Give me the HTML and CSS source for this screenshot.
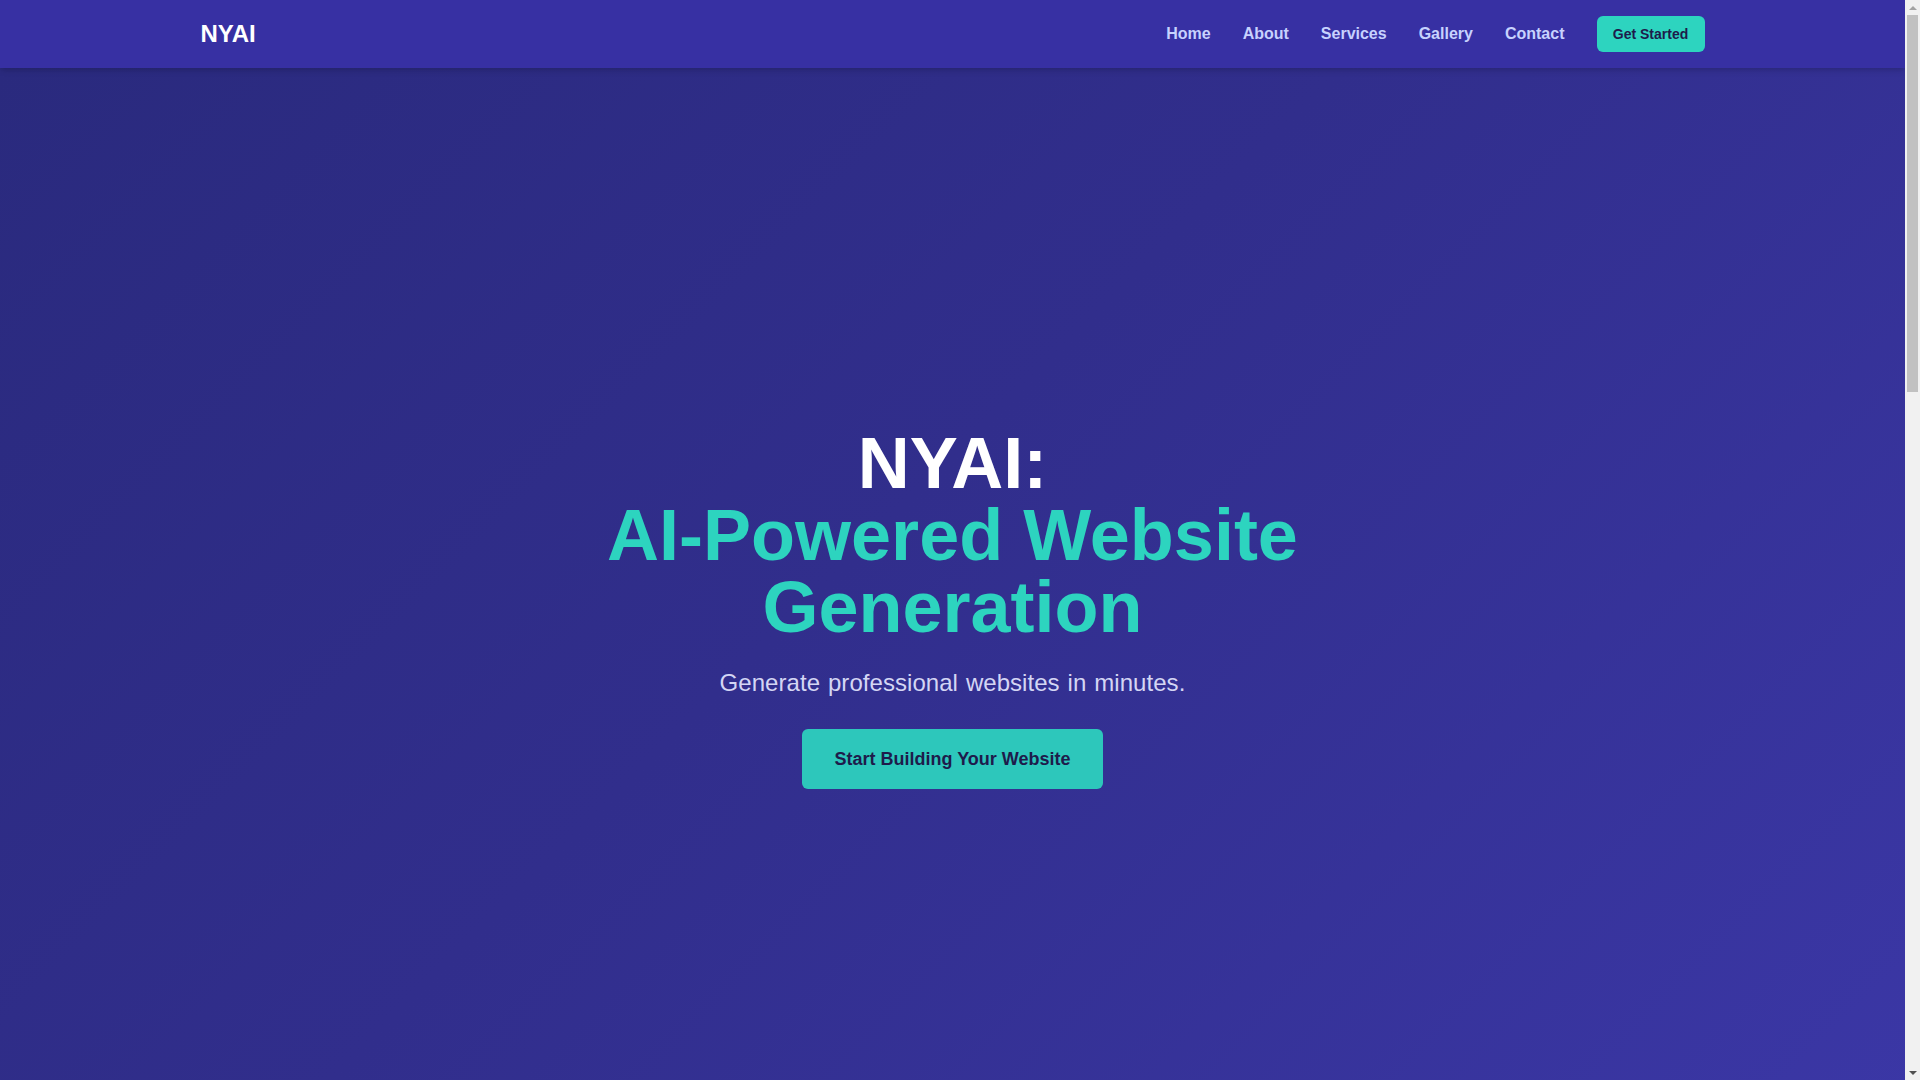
FILE: index.html
```html
<!DOCTYPE html>
<html lang="en">
<head>
<meta charset="utf-8">
<title>NYAI - AI-Powered Website Generation</title>
<link rel="stylesheet" href="styles.css">
</head>
<body>
<header class="site-header">
  <div class="container header-inner">
    <a class="logo" href="#">NYAI</a>
    <nav class="nav">
      <a href="#" class="nav-link">Home</a>
      <a href="#about" class="nav-link">About</a>
      <a href="#services" class="nav-link">Services</a>
      <a href="#gallery" class="nav-link">Gallery</a>
      <a href="#contact" class="nav-link">Contact</a>
      <a href="#" class="btn-small">Get Started</a>
    </nav>
  </div>
</header>
<main>
  <section class="hero">
    <div class="hero-content">
      <h1 class="hero-title"><span class="title-white">NYAI:</span><br><span class="title-teal">AI-Powered Website<br>Generation</span></h1>
      <p class="hero-sub">Generate professional websites in minutes.</p>
      <a href="#" class="btn-large">Start Building Your Website</a>
    </div>
  </section>
  <section class="section" id="about">
    <div class="container">
      <h2 class="section-title">About NYAI</h2>
      <p class="section-text">NYAI uses artificial intelligence to design, write and launch websites for you.</p>
    </div>
  </section>
  <section class="section alt" id="services">
    <div class="container">
      <h2 class="section-title">Services</h2>
      <p class="section-text">Design, content, hosting and optimisation, all in one place.</p>
    </div>
  </section>
  <section class="section" id="gallery">
    <div class="container">
      <h2 class="section-title">Gallery</h2>
      <p class="section-text">Websites built with NYAI.</p>
    </div>
  </section>
  <section class="section alt" id="contact">
    <div class="container">
      <h2 class="section-title">Contact</h2>
      <p class="section-text">Get in touch with our team.</p>
    </div>
  </section>
</main>
<div class="fake-scrollbar" aria-hidden="true">
  <span class="sb-arrow sb-up"></span>
  <span class="sb-thumb"></span>
  <span class="sb-arrow sb-down"></span>
</div>
</body>
</html>
```

FILE: styles.css
```css
* {
  box-sizing: border-box;
}

html, body {
  margin: 0;
  padding: 0;
}

body {
  margin-right: 15px;
  font-family: "Liberation Sans", Arial, Helvetica, sans-serif;
  background: #2f2c85;
  color: #ffffff;
}

a {
  text-decoration: none;
}

.container {
  max-width: 1536px;
  margin: 0 auto;
  padding: 0 16px;
}

.site-header {
  position: relative;
  z-index: 10;
  background: #3730a3;
  box-shadow: 0 4px 6px -1px rgba(0, 0, 0, 0.12), 0 2px 4px -2px rgba(0, 0, 0, 0.1);
}

.header-inner {
  height: 68px;
  display: flex;
  align-items: center;
  justify-content: space-between;
}

.logo {
  color: #ffffff;
  font-size: 24px;
  font-weight: 700;
  line-height: 32px;
}

.nav {
  display: flex;
  align-items: center;
  gap: 32px;
}

.nav-link {
  color: #c7d2fe;
  font-size: 16px;
  font-weight: 700;
  line-height: 24px;
}

.btn-small {
  display: inline-block;
  background: #2dd4bf;
  color: #1e1b4b;
  font-size: 14px;
  font-weight: 700;
  line-height: 20px;
  padding: 8px 12px;
  border-radius: 6px;
  width: 108px;
  text-align: center;
}

.hero {
  min-height: 100vh;
  display: flex;
  align-items: center;
  justify-content: center;
  background: linear-gradient(135deg, #2a2a7e 0%, #312e8c 45%, #3b37a6 100%);
  text-align: center;
}

.hero-content {
  display: flex;
  flex-direction: column;
  align-items: center;
}

.hero-title {
  margin: 0 0 24px;
  font-size: 72px;
  font-weight: 700;
  line-height: 72px;
}

.title-white {
  color: #ffffff;
}

.title-teal {
  color: #2dd4bf;
}

.hero-sub {
  margin: 0 0 30px;
  font-size: 24px;
  line-height: 32px;
  word-spacing: 1.2px;
  letter-spacing: 0.05px;
  color: #d4d6f4;
}

.btn-large {
  display: inline-block;
  background: #2dc7bb;
  color: #1e1b4b;
  font-size: 18px;
  font-weight: 700;
  line-height: 28px;
  padding: 16px 32px;
  border-radius: 6px;
}

.section {
  min-height: 465px;
  padding: 80px 0;
  background: #3730a3;
}

.section.alt {
  background: #312e81;
}

.section-title {
  margin: 0 0 16px;
  font-size: 36px;
  text-align: center;
}

.section-text {
  margin: 0;
  font-size: 18px;
  text-align: center;
  color: #c7d2fe;
}

/* replica of the browser's classic scrollbar */
.fake-scrollbar {
  position: fixed;
  top: 0;
  right: 0;
  width: 15px;
  height: 100vh;
  background: #f1f1f1;
  display: flex;
  flex-direction: column;
  align-items: center;
  z-index: 100;
}

.sb-arrow {
  flex: 0 0 15px;
  width: 15px;
  display: flex;
  align-items: center;
  justify-content: center;
}

.sb-arrow::before {
  content: "";
  width: 0;
  height: 0;
  border-left: 4px solid transparent;
  border-right: 4px solid transparent;
}

.sb-up::before {
  border-bottom: 4px solid #a3a3a3;
}

.sb-down::before {
  border-top: 4px solid #505050;
}

.sb-thumb {
  width: 11px;
  height: 377px;
  background: #c1c1c1;
}

.sb-down {
  margin-top: auto;
}
```
